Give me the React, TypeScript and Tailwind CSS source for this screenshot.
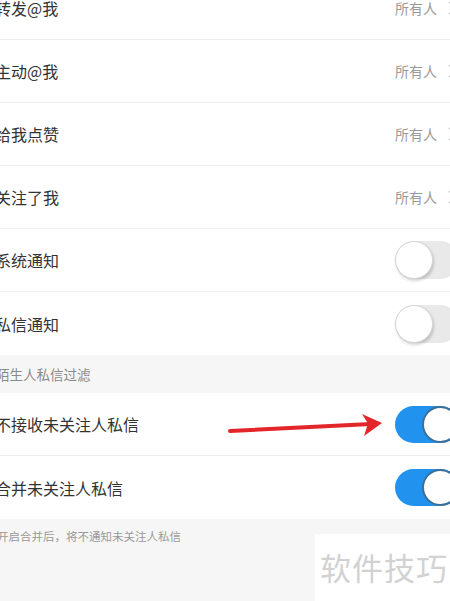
import React from "react";

const font = { fontFamily: '"Noto Sans CJK SC", "Noto Sans", sans-serif' };

const Chevron = () => (
  <svg width="8" height="14" viewBox="0 0 8 14" className="ml-[11px] -mr-[6px] shrink-0">
    <path d="M1 1l6 6-6 6" fill="none" stroke="#c8c8c8" strokeWidth="1.3" />
  </svg>
);

const Toggle = ({ on }: { on: boolean }) =>
  on ? (
    <div className="-mr-[9px] flex h-[37px] w-[64px] shrink-0 items-center justify-end rounded-full bg-[#2193ee]">
      <div className="h-[37px] w-[37px] rounded-full border-2 border-[#3b6f97] bg-white" />
    </div>
  ) : (
    <div className="-mr-[9px] flex h-[38px] w-[64px] shrink-0 items-center rounded-full bg-[#e9e9e9]">
      <div className="h-[38px] w-[38px] rounded-full border border-[#d6d6d6] bg-white shadow-[1px_2px_3px_rgba(0,0,0,0.18)]" />
    </div>
  );

const Row = ({
  label,
  value,
  toggle,
  divider = true,
  first = false,
}: {
  label: string;
  value?: string;
  toggle?: boolean;
  divider?: boolean;
  first?: boolean;
}) => (
  <div
    className={`flex h-[63px] items-center justify-between bg-white ${
      divider ? "border-b border-[#efefef]" : ""
    } ${first ? "-mt-[23px]" : ""}`}
  >
    <span className="-ml-[5px] text-[16px] text-[#333333]">{label}</span>
    {value !== undefined ? (
      <div className="flex items-center">
        <span className="text-[14px] text-[#9a9a9a]">{value}</span>
        <Chevron />
      </div>
    ) : (
      <Toggle on={!!toggle} />
    )}
  </div>
);

export default function App() {
  return (
    <div className="relative h-[601px] w-[450px] overflow-hidden bg-[#f6f6f6]" style={font}>
      <Row label="转发@我" value="所有人" first />
      <Row label="主动@我" value="所有人" />
      <Row label="给我点赞" value="所有人" />
      <Row label="关注了我" value="所有人" />
      <Row label="系统通知" toggle={false} />
      <Row label="私信通知" toggle={false} divider={false} />

      <div className="flex h-[38px] items-center">
        <span className="-ml-[4px] text-[13.5px] text-[#8a8a8a]">陌生人私信过滤</span>
      </div>

      <Row label="不接收未关注人私信" toggle />
      <Row label="合并未关注人私信" toggle divider={false} />

      <div className="pt-[3px]">
        <span className="-ml-[3px] text-[11.5px] text-[#999999]">开启合并后，将不通知未关注人私信</span>
      </div>

      {/* red arrow annotation */}
      <svg
        className="absolute left-[225px] top-[410px]"
        width="160"
        height="30"
        viewBox="0 0 160 30"
      >
        <path d="M5 21 L146 14" stroke="#e3262a" strokeWidth="4" strokeLinecap="round" />
        <polygon points="157,13 137,4 143,13.5 139,26" fill="#e3262a" />
      </svg>

      {/* watermark */}
      <div className="absolute left-[315px] top-[534px] flex h-[67px] w-[135px] items-center bg-white pl-[5px]">
        <span className="text-[31px] tracking-[1px] text-[#d2d2d2]">软件技巧</span>
      </div>
    </div>
  );
}
